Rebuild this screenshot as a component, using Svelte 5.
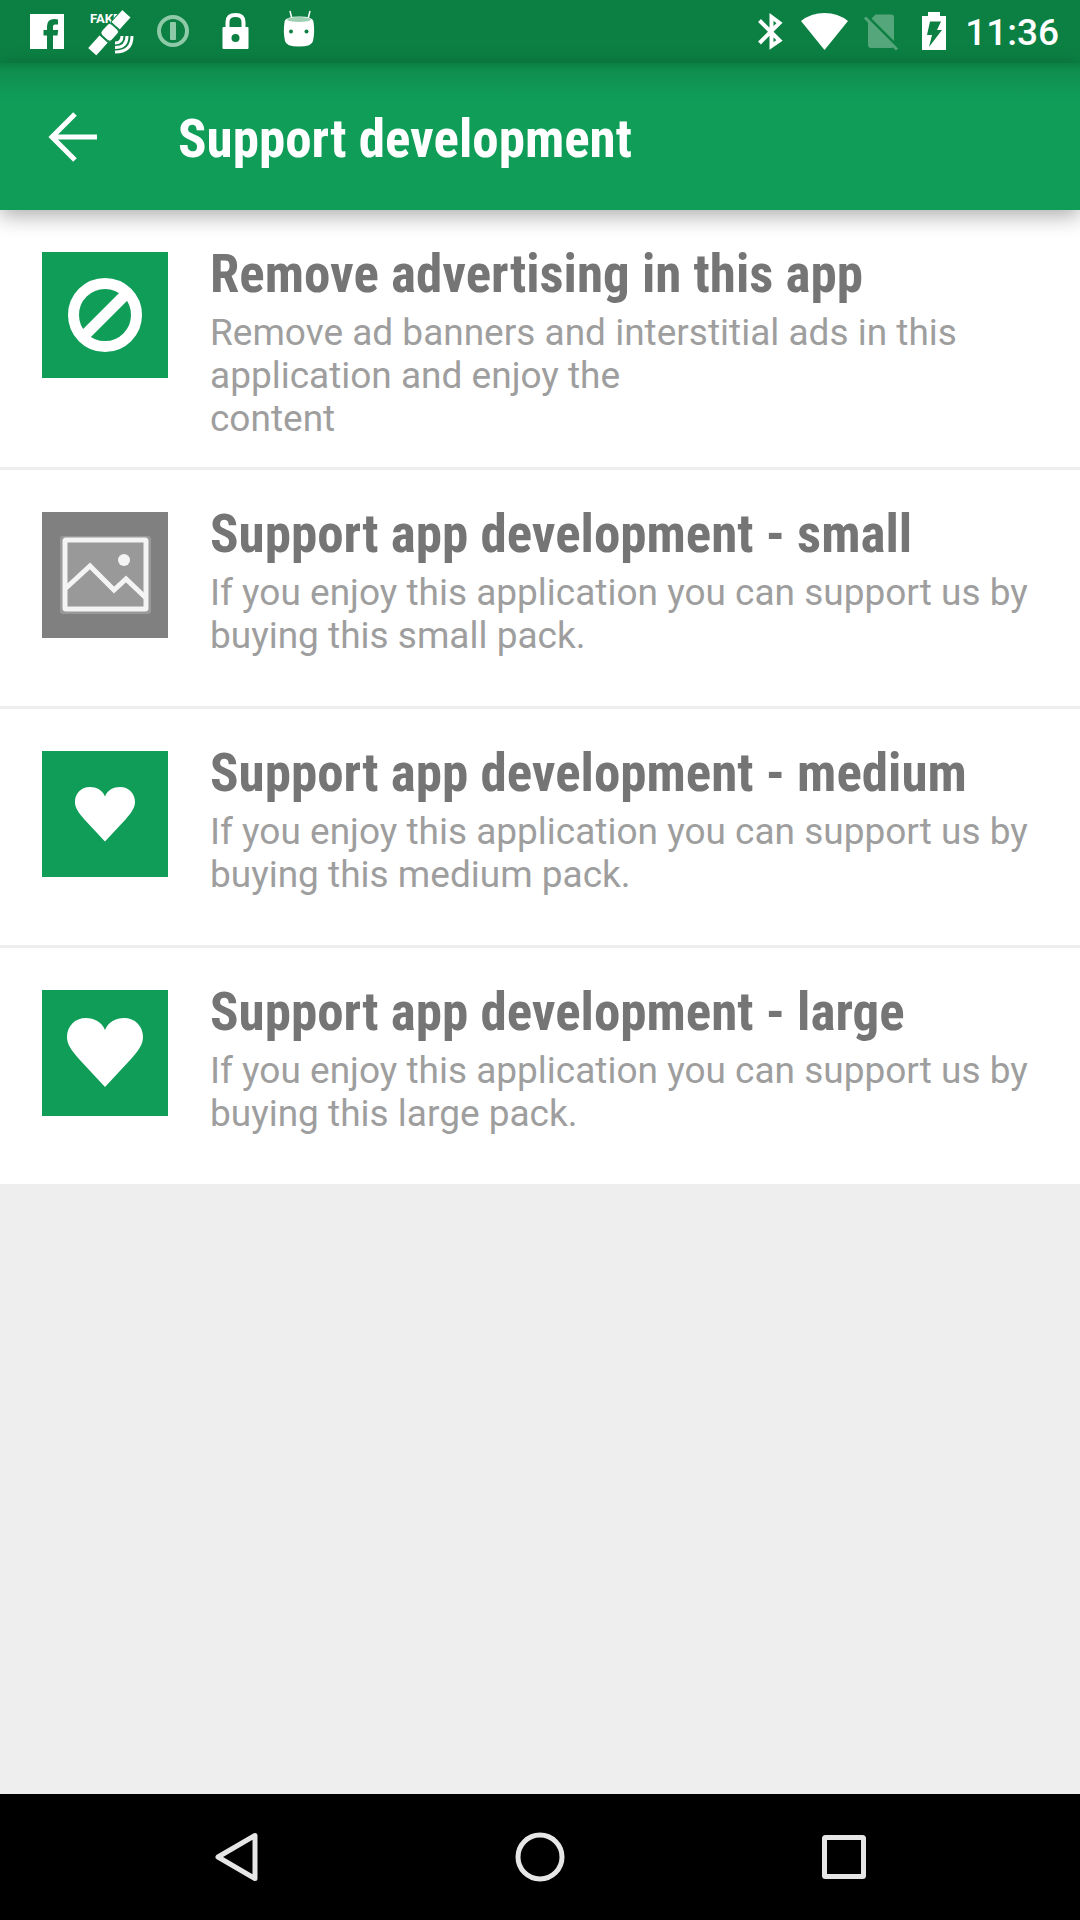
<script>
  const packs = [
    {
      icon: 'block',
      title: 'Remove advertising in this app',
      text: 'Remove ad banners and interstitial ads in this application and enjoy the\ncontent',
    },
    {
      icon: 'picture',
      title: 'Support app development - small',
      text: 'If you enjoy this application you can support us by buying this small pack.',
    },
    {
      icon: 'heart-medium',
      title: 'Support app development - medium',
      text: 'If you enjoy this application you can support us by buying this medium pack.',
    },
    {
      icon: 'heart-large',
      title: 'Support app development - large',
      text: 'If you enjoy this application you can support us by buying this large pack.',
    },
  ];
</script>

{#snippet heart()}
  <path
    fill="#fff"
    d="M63 97 L37 69 C29 60 25 54 25 47 C25 36 33 28 44 28 C52 28 60 32 63 40 C66 32 74 28 82 28 C93 28 101 36 101 47 C101 54 97 60 89 69 Z"
  />
{/snippet}

<div class="screen">
  <div class="status">
    <div class="group">
      <svg class="note" viewBox="0 0 63 63" aria-label="Facebook">
        <path fill="#fff" d="M14 14H48V49H37V35.500H41.500L42.200 30H37V26.500Q37 24.500 39 24.500H42V19.400Q31 17.500 31 26.500V30H27.500V35.500H31V49H14Z" />
      </svg>
      <svg class="note" viewBox="0 0 63 63" aria-label="Fake GPS">
        <text class="fake" x="11" y="23">FAKE</text>
        <g transform="translate(31 32) rotate(-48)">
          <path fill="#fff" stroke="#0c8043" stroke-width="1" d="M-27 -6H-9V6H-27Z M8 -6H25V6H8Z" />
          <rect x="-8" y="-7" width="15" height="14" rx="4" fill="#fff" stroke="#0c8043" stroke-width="1" />
        </g>
        <path fill="none" stroke="#fff" stroke-width="3" d="M36 43Q43 43 43 36 M36 47.500Q48 47.500 48 36 M36 52Q53 52 53 36" />
      </svg>
      <svg class="note" viewBox="0 0 63 63" aria-label="Password manager">
        <circle cx="31" cy="31" r="14" fill="none" stroke="#8fcaa8" stroke-width="4" />
        <rect x="28" y="22" width="6" height="18" rx="1" fill="#8fcaa8" />
      </svg>
      <svg class="note" viewBox="0 0 63 63" aria-label="Locked">
        <path fill="none" stroke="#fff" stroke-width="4" d="M22.500 28V22Q22.500 15 30.500 15Q38.500 15 38.500 22V28" />
        <rect x="17.500" y="27" width="26" height="22" rx="1" fill="#fff" />
        <circle cx="30.500" cy="38" r="4" fill="#0c8043" />
      </svg>
      <svg class="note" viewBox="0 0 63 63" aria-label="Android">
        <path stroke="#fff" stroke-width="1.500" d="M22 11L24 19 M42 11L40 19" />
        <path fill="#fff" d="M16.500 22Q17 16.500 31.500 16.500Q45 16.500 45.500 22Q47 32 45 41Q44 46.500 31 46.500Q18 46.500 17 41Q15 32 16.500 22Z" />
        <ellipse cx="31" cy="19.500" rx="12" ry="2.500" fill="#9fd0b3" />
        <circle cx="23" cy="31.500" r="2" fill="#0c8043" />
        <circle cx="38.500" cy="31.500" r="2" fill="#0c8043" />
      </svg>
    </div>
    <div class="group">
      <svg class="sys" viewBox="0 0 54 63" aria-label="Bluetooth">
        <path fill="none" stroke="#fff" stroke-width="4" d="M16.500 20.500L36.500 40.500L28.500 46V17L36.500 23L16.500 43" />
      </svg>
      <svg class="sys" viewBox="0 0 54 63" aria-label="Wi-Fi">
        <path fill="#fff" d="M4 21Q14 13 27.500 13Q41 13 51 21L27.500 50Z" />
      </svg>
      <svg class="sys" viewBox="0 0 54 63" aria-label="No SIM card">
        <path fill="#55a67b" d="M17 22L24.500 14.500H40Q43 14.500 43 17.500V45Q43 48 40 48H20Q17 48 17 45Z" />
        <path stroke="#0c8043" stroke-width="3" d="M17 17L46 46" />
        <path stroke="#55a67b" stroke-width="3" d="M14 17.500L46 49.500" />
      </svg>
      <svg class="sys" viewBox="0 0 54 63" aria-label="Battery charging">
        <path fill="#fff" d="M17 16H23V12H35V16H41V50H17Z" />
        <path fill="#0c8043" d="M25 21.500H36L32 30H37L24 47L27 35H22Z" />
      </svg>
      <time>11:36</time>
    </div>
  </div>

  <header>
    <button class="back" aria-label="Back">
      <svg viewBox="0 0 54 54">
        <path fill="none" stroke="#fff" stroke-width="5" d="M51 27H7 M29 4L6 27L29 50" />
      </svg>
    </button>
    <h1>Support development</h1>
  </header>

  <main>
    <ul>
      {#each packs as pack}
        <li>
          <button class="pack">
            <svg class="tile" class:grey={pack.icon === 'picture'} viewBox="0 0 126 126" aria-hidden="true">
              {#if pack.icon === 'block'}
                <g fill="none" stroke="#fff" stroke-width="11">
                  <circle cx="63" cy="63" r="31.500" />
                  <path d="M41 85L85 41" />
                </g>
              {:else if pack.icon === 'picture'}
                <rect x="18" y="24" width="91" height="78" rx="3" fill="#999" />
                <g fill="none" stroke="#f4f4f4" stroke-width="5">
                  <rect x="23" y="28" width="81" height="69" rx="1" />
                  <path d="M24 76L48 54L72 78L84 67L104 86" />
                </g>
                <circle cx="82" cy="48" r="6" fill="#f4f4f4" />
              {:else if pack.icon === 'heart-medium'}
                <g transform="translate(13.200 13.900) scale(.79)">{@render heart()}</g>
              {:else}
                {@render heart()}
              {/if}
            </svg>
            <span class="copy">
              <span class="title">{pack.title}</span>
              <span class="text">{pack.text}</span>
            </span>
          </button>
        </li>
      {/each}
    </ul>
  </main>

  <nav aria-label="System">
    <button aria-label="Back">
      <svg viewBox="0 0 60 60">
        <path d="M49 8.500V51.500L12 30Z" />
      </svg>
    </button>
    <button aria-label="Home">
      <svg viewBox="0 0 60 60"><circle cx="30" cy="30" r="22" /></svg>
    </button>
    <button aria-label="Recent apps">
      <svg viewBox="0 0 60 60"><rect x="10.500" y="10.500" width="39" height="39" rx="1" /></svg>
    </button>
  </nav>
</div>

<style>
  :global(body) {
    margin: 0;
    background: #eee;
  }

  .screen {
    display: flex;
    flex-direction: column;
    min-height: 100vh;
    font-family: Roboto, 'Liberation Sans', sans-serif;
  }

  button {
    border: 0;
    padding: 0;
    background: none;
    font: inherit;
    cursor: pointer;
  }

  svg {
    display: block;
    flex: none;
  }

  .status {
    display: flex;
    justify-content: space-between;
    padding: 0 21px 0 16px;
    background: #0c8043;
  }

  .group {
    display: flex;
    align-items: center;
  }

  .note {
    width: 63px;
    height: 63px;
  }

  .sys {
    width: 54px;
    height: 63px;
  }

  .fake {
    fill: #fff;
    font-size: 13px;
    font-weight: 700;
  }

  time {
    padding: 2px 0 0 6px;
    color: #fff;
    font-size: 37px;
    font-weight: 500;
    line-height: 61px;
  }

  header {
    display: flex;
    align-items: center;
    gap: 78px;
    box-sizing: border-box;
    height: 147px;
    padding: 0 46px;
    background: linear-gradient(#0c8043, #0f8f4e 8px, #109957 28px, #0f9d58 40px);
    box-shadow: 0 6px 20px rgba(0, 0, 0, 0.32);
    position: relative;
  }

  .back svg {
    width: 54px;
    height: 54px;
  }

  h1,
  .title {
    font-family: 'Roboto Condensed', Roboto, sans-serif;
    font-size: 53px;
    font-weight: 700;
    line-height: 62px;
  }

  h1 {
    margin: 0;
    padding-top: 4px;
    color: #fff;
  }

  ul {
    margin: 0;
    padding: 0;
    list-style: none;
    background: #fff;
  }

  li + li {
    border-top: 3px solid #eee;
  }

  .pack {
    display: flex;
    align-items: flex-start;
    gap: 42px;
    box-sizing: border-box;
    width: 100%;
    min-height: 236px;
    padding: 33px 42px 27px;
    text-align: left;
  }

  .tile {
    width: 126px;
    height: 126px;
    margin-top: 9px;
    background: #0f9d58;
  }

  .tile.grey {
    background: #808080;
  }

  .copy {
    display: flex;
    flex: 1;
    flex-direction: column;
    gap: 6px;
  }

  .title {
    color: #757575;
  }

  .text {
    color: #9e9e9e;
    font-size: 37px;
    line-height: 43px;
    white-space: pre-line;
  }

  nav {
    display: grid;
    grid-template-columns: repeat(3, 1fr);
    margin-top: auto;
    padding: 0 84px;
    background: #000;
  }

  nav button {
    display: flex;
    align-items: center;
    justify-content: center;
    height: 126px;
  }

  nav svg {
    width: 60px;
    height: 60px;
    fill: none;
    stroke: #e6e6e6;
    stroke-width: 5;
    stroke-linejoin: round;
  }
</style>
